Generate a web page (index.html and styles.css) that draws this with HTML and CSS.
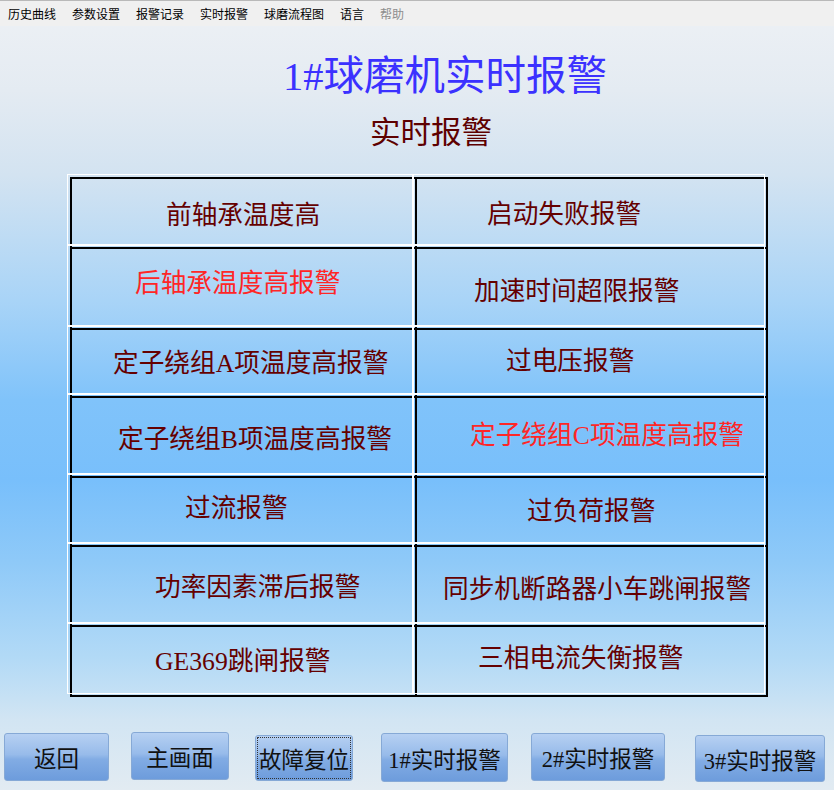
FILE: index.html
```html
<!DOCTYPE html>
<html lang="zh-CN">
<head>
<meta charset="utf-8">
<title>1#球磨机实时报警</title>
<link rel="stylesheet" href="styles.css">
</head>
<body>
<div class="page">
  <div class="menubar">
    <span class="menu-item">历史曲线</span>
    <span class="menu-item">参数设置</span>
    <span class="menu-item">报警记录</span>
    <span class="menu-item">实时报警</span>
    <span class="menu-item">球磨流程图</span>
    <span class="menu-item">语言</span>
    <span class="menu-item disabled">帮助</span>
  </div>
  <h1 class="title">1#球磨机实时报警</h1>
  <h2 class="subtitle">实时报警</h2>
  <div class="grid">
    <div class="cell"><span>前轴承温度高</span></div>
    <div class="cell"><span>启动失败报警</span></div>
    <div class="cell"><span class="active">后轴承温度高报警</span></div>
    <div class="cell"><span>加速时间超限报警</span></div>
    <div class="cell"><span>定子绕组A项温度高报警</span></div>
    <div class="cell"><span>过电压报警</span></div>
    <div class="cell"><span>定子绕组B项温度高报警</span></div>
    <div class="cell"><span class="active">定子绕组C项温度高报警</span></div>
    <div class="cell"><span>过流报警</span></div>
    <div class="cell"><span>过负荷报警</span></div>
    <div class="cell"><span>功率因素滞后报警</span></div>
    <div class="cell"><span>同步机断路器小车跳闸报警</span></div>
    <div class="cell"><span>GE369跳闸报警</span></div>
    <div class="cell"><span>三相电流失衡报警</span></div>
  </div>
  <div class="buttons">
    <button class="btn">返回</button>
    <button class="btn">主画面</button>
    <button class="btn focused">故障复位</button>
    <button class="btn">1#实时报警</button>
    <button class="btn">2#实时报警</button>
    <button class="btn">3#实时报警</button>
  </div>
</div>
</body>
</html>
```
FILE: styles.css
```css
html, body {
  margin: 0;
  padding: 0;
}
body {
  font-family: "Liberation Serif", "Noto Sans CJK SC", serif;
}
.page {
  width: 834px;
  height: 790px;
  overflow: hidden;
  background: linear-gradient(to bottom,
    #eef1f5 0px,
    #e4ebf2 90px,
    #d3e3f1 175px,
    #a9d4f7 300px,
    #80c3fa 400px,
    #78bffb 480px,
    #8ec9f8 560px,
    #b3daf6 660px,
    #d2e5f3 720px,
    #e2ebf2 790px);
}
.menubar {
  height: 25px;
  border-top: 1px solid #b9b9b9;
  background: #f0f0f0;
  display: flex;
  font-family: "Noto Sans CJK SC", sans-serif;
  font-size: 12px;
  line-height: 25px;
  color: #000;
}
.menu-item {
  padding: 0 8px;
  white-space: nowrap;
}
.menu-item.disabled {
  color: #8d8d8d;
}
.title {
  margin: 27px 0 0 0;
  padding-left: 56px;
  text-align: center;
  font-weight: normal;
  font-size: 40.5px;
  line-height: 48px;
  color: #3b31ff;
  white-space: nowrap;
}
.subtitle {
  margin: 14px 0 0 0;
  padding-left: 28px;
  text-align: center;
  font-weight: normal;
  font-size: 30.5px;
  line-height: 36px;
  color: #5e0000;
  white-space: nowrap;
}
.grid {
  margin: 26px 0 0 70px;
  width: 698px;
  box-sizing: border-box;
  display: grid;
  grid-template-columns: 345px 351px;
  grid-template-rows: 70px 81px 68px 80px 69px 80px 70px;
  border-right: 2px solid #000;
  border-bottom: 2px solid #000;
}
.cell {
  position: relative;
  box-sizing: border-box;
  border-top: 2px solid #000;
  border-left: 2px solid #000;
  display: flex;
  align-items: flex-start;
  font-size: 25.7px;
  line-height: 30px;
  color: #650000;
  white-space: nowrap;
}
.cell::before {
  content: "";
  position: absolute;
  top: -5px;
  left: -5px;
  width: calc(100% + 2px);
  height: calc(100% + 2px);
  border: 1px solid #ffffff;
  pointer-events: none;
}
.cell .active {
  color: #ff2626;
}
.cell:nth-child(1)  { padding: 22px 0 0 94px; }
.cell:nth-child(2)  { padding: 21px 0 0 70px; }
.cell:nth-child(3)  { padding: 20px 0 0 63px; }
.cell:nth-child(4)  { padding: 28px 0 0 57px; }
.cell:nth-child(5)  { padding: 19px 0 0 41px; }
.cell:nth-child(6)  { padding: 17px 0 0 89px; }
.cell:nth-child(7)  { padding: 27px 0 0 46px; }
.cell:nth-child(8)  { padding: 23px 0 0 53px; }
.cell:nth-child(9)  { padding: 16px 0 0 113px; }
.cell:nth-child(10) { padding: 19px 0 0 110px; }
.cell:nth-child(11) { padding: 26px 0 0 83px; }
.cell:nth-child(12) { padding: 28px 0 0 26px; }
.cell:nth-child(13) { padding: 20px 0 0 83px; }
.cell:nth-child(14) { padding: 17px 0 0 61px; }

.buttons {
  display: flex;
  align-items: flex-start;
  margin-top: 34px;
}
.btn {
  box-sizing: border-box;
  padding: 0;
  height: 48px;
  border: 1px solid #86a9d6;
  border-radius: 3px;
  background: linear-gradient(to bottom, #b6d0f2 0%, #97bbea 45%, #82ace4 55%, #6d9cdc 100%);
  font-family: "Liberation Serif", "Noto Sans CJK SC", serif;
  font-size: 22.5px;
  color: #111;
  white-space: nowrap;
  display: flex;
  align-items: center;
  justify-content: center;
}
.btn.focused {
  outline: 1px dotted #333;
  outline-offset: -3px;
}
.btn:nth-child(1) { width: 105px; margin: 2px 0 0 4px; }
.btn:nth-child(2) { width: 98px;  margin: 1px 0 0 22px; }
.btn:nth-child(3) { width: 98px;  height: 46px; margin: 4px 0 0 26px; }
.btn:nth-child(4) { width: 127px; height: 49px; margin: 2px 0 0 28px; }
.btn:nth-child(5) { width: 134px; margin: 2px 0 0 23px; }
.btn:nth-child(6) { width: 130px; height: 47px; margin: 4px 0 0 30px; }
```
